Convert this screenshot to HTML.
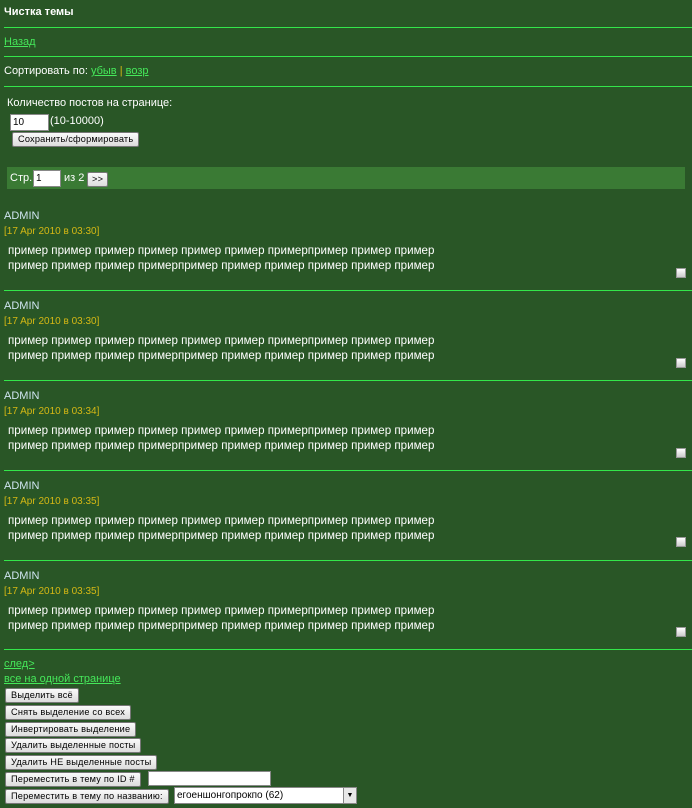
<!DOCTYPE html><html><head><meta charset="utf-8"><style>
body{margin:0;background:#295626;width:692px;height:808px;overflow:hidden;position:relative;font-family:"Liberation Sans",Arial,sans-serif;font-size:11px;color:#fff}
.a{position:absolute;white-space:nowrap}
.hr{position:absolute;left:4px;right:0;height:1px;background:#33e64a}
a{color:#45e85a;text-decoration:underline}
.btn{position:absolute;left:5px;height:13px;background:linear-gradient(#fafafa,#dcdcdc);border:1px solid #777;border-radius:2px;font-size:9.2px;letter-spacing:0.2px;color:#000;line-height:13px;padding:0 5px;box-sizing:content-box;white-space:nowrap}
.inp{position:absolute;background:#fff;border:1px solid #888;color:#000;font-size:10px;line-height:15px;padding-left:2px;box-sizing:border-box}
.nm{color:#cfe4f0;font-size:11px}
.dt{color:#d6b814;font-size:10px}
.tx{font-size:11.6px;line-height:15px}
.cb{position:absolute;left:676px;width:8px;height:8px;border:1px solid #999;background:linear-gradient(#fff,#ccc)}
</style></head><body>
<div class="a" style="left:4px;top:6px;font-weight:bold">Чистка темы</div>
<div class="hr" style="top:27px"></div>
<div class="a" style="left:4px;top:36px"><a>Назад</a></div>
<div class="hr" style="top:56px"></div>
<div class="a" style="left:4px;top:65px">Сортировать по: <a>убыв</a> <span style="color:#d6b814">|</span> <a>возр</a></div>
<div class="hr" style="top:86px"></div>
<div class="a" style="left:7px;top:97px">Количество постов на странице:</div>
<div class="inp" style="left:10px;top:114px;width:39px;height:17px">10</div>
<div class="a" style="left:50px;top:115px">(10-10000)</div>
<div class="btn" style="left:12px;top:132px">Сохранить/сформировать</div>
<div style="position:absolute;left:7px;top:167px;width:678px;height:22px;background:#3a7a34"></div>
<div class="a" style="left:10px;top:172px">Стр.</div>
<div class="inp" style="left:33px;top:170px;width:28px;height:17px">1</div>
<div class="a" style="left:64px;top:172px">из 2</div>
<div class="btn" style="left:87px;top:172px;padding:0 4px">&gt;&gt;</div>

<div class="a nm" style="left:4px;top:210px">ADMIN</div><div class="a dt" style="left:4px;top:226px">[17 Apr 2010 в 03:30]</div><div class="a tx" style="left:8px;top:243px">пример пример пример пример пример пример примерпример пример пример<br>пример пример пример примерпример пример пример пример пример пример</div><div class="cb" style="top:268px"></div><div class="hr" style="top:290px"></div>
<div class="a nm" style="left:4px;top:300px">ADMIN</div><div class="a dt" style="left:4px;top:316px">[17 Apr 2010 в 03:30]</div><div class="a tx" style="left:8px;top:333px">пример пример пример пример пример пример примерпример пример пример<br>пример пример пример примерпример пример пример пример пример пример</div><div class="cb" style="top:358px"></div><div class="hr" style="top:380px"></div>
<div class="a nm" style="left:4px;top:390px">ADMIN</div><div class="a dt" style="left:4px;top:406px">[17 Apr 2010 в 03:34]</div><div class="a tx" style="left:8px;top:423px">пример пример пример пример пример пример примерпример пример пример<br>пример пример пример примерпример пример пример пример пример пример</div><div class="cb" style="top:448px"></div><div class="hr" style="top:470px"></div>
<div class="a nm" style="left:4px;top:480px">ADMIN</div><div class="a dt" style="left:4px;top:496px">[17 Apr 2010 в 03:35]</div><div class="a tx" style="left:8px;top:513px">пример пример пример пример пример пример примерпример пример пример<br>пример пример пример примерпример пример пример пример пример пример</div><div class="cb" style="top:537px"></div><div class="hr" style="top:560px"></div>
<div class="a nm" style="left:4px;top:570px">ADMIN</div><div class="a dt" style="left:4px;top:586px">[17 Apr 2010 в 03:35]</div><div class="a tx" style="left:8px;top:603px">пример пример пример пример пример пример примерпример пример пример<br>пример пример пример примерпример пример пример пример пример пример</div><div class="cb" style="top:627px"></div><div class="hr" style="top:649px"></div>

<div class="a" style="left:4px;top:658px"><a>след&gt;</a></div>
<div class="a" style="left:4px;top:673px"><a>все на одной странице</a></div>
<div class="btn" style="top:688px">Выделить всё</div>
<div class="btn" style="top:705px">Снять выделение со всех</div>
<div class="btn" style="top:722px">Инвертировать выделение</div>
<div class="btn" style="top:738px">Удалить выделенные посты</div>
<div class="btn" style="top:755px">Удалить НЕ выделенные посты</div>
<div class="btn" style="top:772px">Переместить в тему по ID #</div>
<div class="inp" style="left:148px;top:771px;width:123px;height:15px"></div>
<div class="btn" style="top:789px">Переместить в тему по названию:</div>
<div class="inp" style="left:174px;top:787px;width:183px;height:17px">егоеншонгопрокпо (62)<div style="position:absolute;right:0;top:0;width:12px;height:15px;background:#e8e8e8;border-left:1px solid #888;font-size:7px;line-height:15px;text-align:center">▼</div></div>
</body></html>
